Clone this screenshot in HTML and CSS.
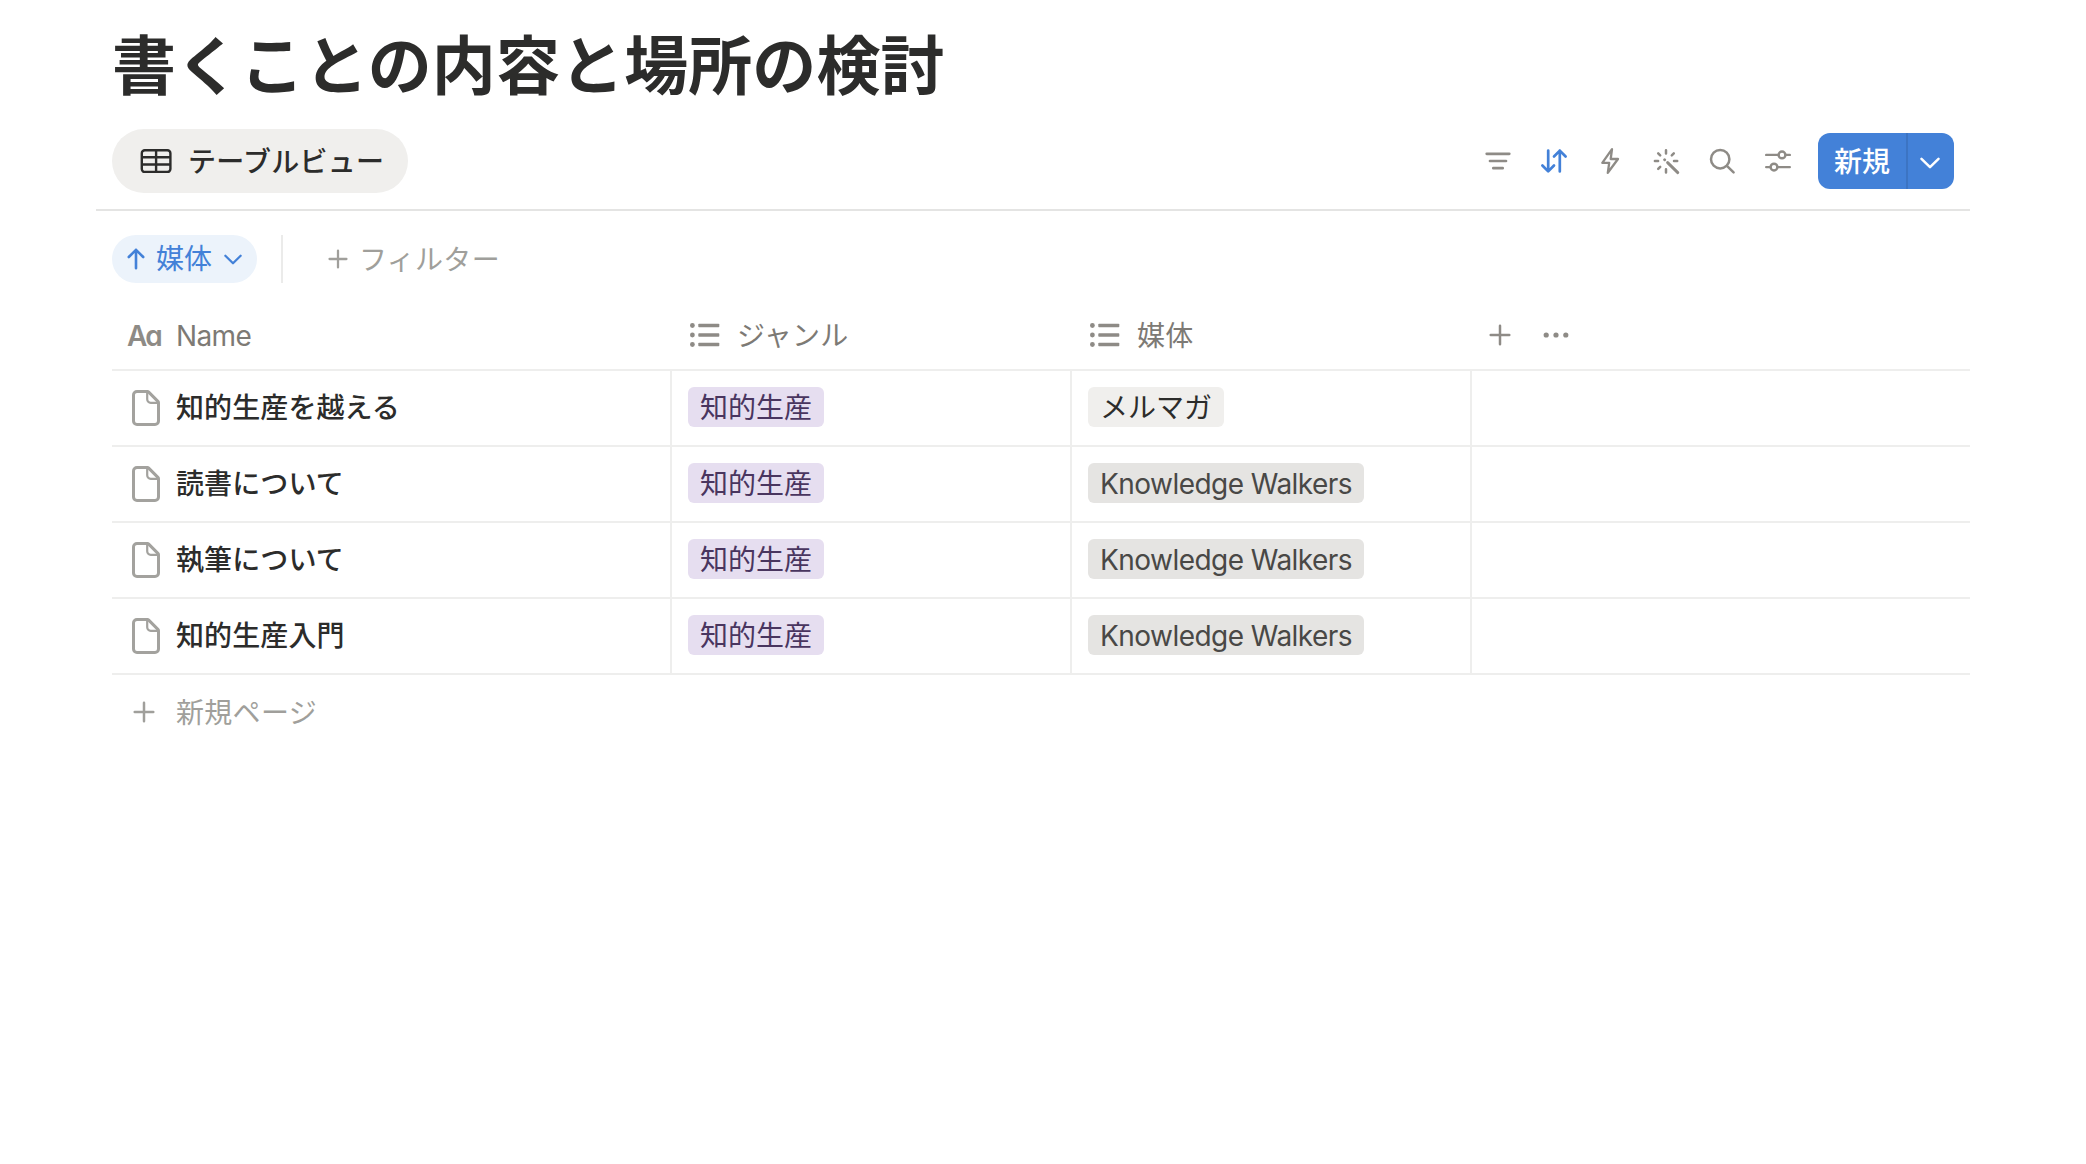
FILE: index.html
```html
<!DOCTYPE html>
<html lang="ja">
<head>
  <meta charset="UTF-8" />
  <meta name="viewport" content="width=device-width, initial-scale=1.0" />
  <title>書くことの内容と場所の検討</title>
  <link rel="stylesheet" href="styles.css">
</head>
<body>
  <!-- 共通アイコン -->
  <svg class="defs" width="0" height="0">
    <symbol id="icon-page" viewBox="0 0 28 36">
      <path d="M5 1.5h10.2a2 2 0 0 1 1.5.6l9.2 9.3a2 2 0 0 1 .6 1.4V31a3.5 3.5 0 0 1-3.5 3.5H5A3.5 3.5 0 0 1 1.5 31V5A3.5 3.5 0 0 1 5 1.5z" fill="none" stroke="currentColor" stroke-width="3"/>
      <path d="M15.2 2v7.3a3.5 3.5 0 0 0 3.5 3.5H26" fill="none" stroke="currentColor" stroke-width="2.2"/>
    </symbol>
    <symbol id="icon-list" viewBox="0 0 30 24">
      <g fill="currentColor">
        <circle cx="2.4" cy="2.5" r="2.4"/><circle cx="2.4" cy="12" r="2.4"/><circle cx="2.4" cy="21.5" r="2.4"/>
        <rect x="8.3" y=".8" width="21" height="3.4" rx=".8"/><rect x="8.3" y="10.3" width="21" height="3.4" rx=".8"/><rect x="8.3" y="19.8" width="21" height="3.4" rx=".8"/>
      </g>
    </symbol>
    <symbol id="icon-plus" viewBox="0 0 22 22">
      <path d="M11 1.7v18.6M1.7 11h18.6" fill="none" stroke="currentColor" stroke-width="2.5" stroke-linecap="round"/>
    </symbol>
    <symbol id="icon-chevron" viewBox="0 0 20 12">
      <path d="M1.5 1.8 10 10.2l8.5-8.4" fill="none" stroke="currentColor" stroke-width="2.5" stroke-linecap="round" stroke-linejoin="round"/>
    </symbol>
  </svg>

  <main class="page">
    <h1>書くことの内容と場所の検討</h1>

    <!-- ビュー切り替えとツールバー -->
    <div class="view-bar">
      <div class="view-tab">
        <svg width="32" height="24" viewBox="0 0 32 24" fill="none" stroke="currentColor" stroke-width="2.4">
          <rect x="1.8" y="1.2" width="28.6" height="21.8" rx="3"/>
          <path d="M2 8.3h28.4M2 15.5h28.4M16.1 1v22"/>
        </svg>
        <span>テーブルビュー</span>
      </div>

      <div class="tools">
        <svg viewBox="0 0 32 32" stroke-width="2.7"><path d="M4.7 8.8h22.6M8 16h16M11.3 23.2h9.4"/></svg>
        <svg class="active" viewBox="0 0 32 32" stroke-width="2.7"><path d="M10.2 5.5v20.8M4.4 20.5l5.8 5.9 5.8-5.9M21.8 26.5V5.7M16 11.5l5.8-5.9 5.8 5.9"/></svg>
        <svg viewBox="0 0 32 32" stroke-width="2.3"><path d="M18 4.2 8.3 17.8h6.9l-1.4 10L24 14h-7.3z"/></svg>
        <svg viewBox="0 0 32 32" stroke-width="2.5"><path d="M16 5.2v3.2M16 24.2v3.2M4.9 16.1h3.2M24 16.1h3.2M8.2 8.4l2 2M23.8 8.4l-2 2M8.2 23.9l2-2"/><path d="M14.6 14.7l.1.1M17.6 17.6l10.2 10" stroke-width="2.9"/></svg>
        <svg viewBox="0 0 32 32" stroke-width="2.5"><circle cx="14.2" cy="14.2" r="9.2"/><path d="M20.9 20.9l6.7 6.5"/></svg>
        <svg viewBox="0 0 32 32" stroke-width="2.4"><path d="M4.2 9.9h12.2M23.6 9.9h4.2M4.2 22.1h4.2M15.6 22.1h12.2"/><circle cx="20" cy="9.9" r="3.4"/><circle cx="12" cy="22.1" r="3.4"/></svg>
      </div>

      <div class="new-button">
        <span class="new-label">新規</span>
        <span class="new-more"><svg width="20" height="12"><use href="#icon-chevron"/></svg></span>
      </div>
    </div>

    <!-- 並べ替え・フィルター -->
    <div class="filter-bar">
      <div class="sort-pill">
        <svg width="18" height="22" viewBox="0 0 18 22" fill="none" stroke="currentColor" stroke-width="2.6" stroke-linecap="round" stroke-linejoin="round"><path d="M9 20.2V1.8M1.8 9 9 1.8 16.2 9"/></svg>
        <span>媒体</span>
        <svg class="pill-chevron" width="18" height="11"><use href="#icon-chevron"/></svg>
      </div>
      <div class="divider"></div>
      <div class="add-filter">
        <svg width="20" height="20"><use href="#icon-plus"/></svg>
        <span>フィルター</span>
      </div>
    </div>

    <div class="table">
      <div class="row head">
        <div class="cell"><span class="type-title">Aa</span><span class="name-label">Name</span></div>
        <div class="cell"><svg width="30" height="24"><use href="#icon-list"/></svg><span>ジャンル</span></div>
        <div class="cell"><svg width="30" height="24"><use href="#icon-list"/></svg><span>媒体</span></div>
        <div class="cell actions">
          <svg width="22" height="22"><use href="#icon-plus"/></svg>
          <svg width="26" height="6" viewBox="0 0 26 6" fill="currentColor"><circle cx="3.2" cy="3" r="2.6"/><circle cx="13" cy="3" r="2.6"/><circle cx="22.8" cy="3" r="2.6"/></svg>
        </div>
      </div>

      <div class="row">
        <div class="cell name"><svg width="28" height="36"><use href="#icon-page"/></svg><span>知的生産を越える</span></div>
        <div class="cell"><span class="tag purple">知的生産</span></div>
        <div class="cell"><span class="tag light">メルマガ</span></div>
        <div class="cell"></div>
      </div>
      <div class="row">
        <div class="cell name"><svg width="28" height="36"><use href="#icon-page"/></svg><span>読書について</span></div>
        <div class="cell"><span class="tag purple">知的生産</span></div>
        <div class="cell"><span class="tag gray">Knowledge Walkers</span></div>
        <div class="cell"></div>
      </div>
      <div class="row">
        <div class="cell name"><svg width="28" height="36"><use href="#icon-page"/></svg><span>執筆について</span></div>
        <div class="cell"><span class="tag purple">知的生産</span></div>
        <div class="cell"><span class="tag gray">Knowledge Walkers</span></div>
        <div class="cell"></div>
      </div>
      <div class="row">
        <div class="cell name"><svg width="28" height="36"><use href="#icon-page"/></svg><span>知的生産入門</span></div>
        <div class="cell"><span class="tag purple">知的生産</span></div>
        <div class="cell"><span class="tag gray">Knowledge Walkers</span></div>
        <div class="cell"></div>
      </div>

      <div class="new-page">
        <svg width="22" height="22"><use href="#icon-plus"/></svg>
        <span>新規ページ</span>
      </div>
    </div>
  </main>
</body>
</html>
```
FILE: styles.css
```css
* {
  box-sizing: border-box;
}

body {
  margin: 0;
  background: #fff;
  color: #2c2c2b;
  font-family: Inter, "Noto Sans CJK JP", sans-serif;
  font-size: 28px;
  line-height: 40px;
  white-space: nowrap;
}

svg {
  display: block;
  flex: none;
}

.defs {
  position: absolute;
}

.page {
  width: 1874px;
  margin-left: 96px;
  padding-top: 26px;
}

h1 {
  margin: 0;
  padding-left: 16px;
  font-size: 64px;
  font-weight: 700;
  line-height: 80px;
  letter-spacing: 0.1px;
}

/* ビュー切り替え */
.view-bar {
  display: flex;
  align-items: center;
  height: 105px;
  padding: 7px 16px 0;
  border-bottom: 2px solid #e4e4e3;
}

.view-tab {
  display: flex;
  align-items: center;
  gap: 16px;
  width: 296px;
  height: 64px;
  padding-left: 28px;
  border-radius: 32px;
  background: #f0efed;
  font-weight: 500;
  letter-spacing: 0.3px;
}

.view-tab span {
  padding-top: 2px;
}

.tools {
  display: flex;
  gap: 24px;
  margin-left: auto;
}

.tools svg {
  width: 32px;
  height: 32px;
  fill: none;
  stroke: #8e8b86;
  stroke-linecap: round;
  stroke-linejoin: round;
}

.tools .active {
  stroke: #4381d8;
}

.new-button {
  display: flex;
  width: 136px;
  height: 56px;
  margin-left: 24px;
  border-radius: 12px;
  background: #4381d8;
  color: #fff;
  font-weight: 500;
  line-height: 58px;
}

.new-label {
  width: 88px;
  padding-left: 16px;
}

.new-more {
  display: flex;
  flex: 1;
  align-items: center;
  padding: 3px 0 0 12px;
  border-left: 2px solid #3c74c3;
}

/* 並べ替え・フィルター */
.filter-bar {
  display: flex;
  align-items: center;
  height: 48px;
  margin: 24px 0 0 16px;
}

.sort-pill {
  display: flex;
  align-items: center;
  height: 48px;
  width: 145px;
  padding-left: 15px;
  border-radius: 24px;
  background: #ecf3fb;
  color: #4381d8;
}

.sort-pill span {
  margin-left: 11px;
}

.pill-chevron {
  margin-left: 12px;
}

.divider {
  width: 2px;
  height: 48px;
  margin: 0 45px 0 24px;
  background: #ebebea;
}

.add-filter {
  display: flex;
  align-items: center;
  gap: 11px;
  color: #a09f9b;
  letter-spacing: 0.3px;
}

.add-filter span {
  padding-top: 1px;
}

/* テーブル */
.table {
  margin: 20px 0 0 16px;
}

.row {
  display: grid;
  grid-template-columns: 560px 400px 400px 1fr;
  height: 76px;
  border-bottom: 2px solid #eeeeed;
}

.cell {
  display: flex;
  align-items: center;
  padding: 0 16px;
  border-right: 2px solid #eeeeed;
}

.cell:last-child {
  border-right: none;
}

.head {
  height: 68px;
  color: #7d7a75;
}

.head .cell {
  gap: 17px;
  padding: 0 16px 2px 18px;
  border-right: none;
}

.head svg {
  color: #8e8b86;
}

.head span {
  padding-top: 2px;
  letter-spacing: 0.2px;
}

.head .cell:first-child {
  gap: 0;
  padding-left: 15px;
}

.head .type-title {
  width: 49px;
  color: #8e8b86;
  font-weight: 600;
  font-feature-settings: "cv11";
  letter-spacing: -1.6px;
}

.head .name-label {
  letter-spacing: -0.6px;
}

.head .actions {
  gap: 32px;
  padding-left: 17px;
}

.name {
  gap: 16px;
  padding-left: 20px;
  font-weight: 500;
  letter-spacing: 0.1px;
}

.name svg {
  color: #a3a29e;
}

.tag {
  height: 40px;
  margin-bottom: 2px;
  padding: 1px 12px 0;
  border-radius: 6px;
}

.purple {
  background: #e6def0;
  color: #49355f;
}

.light {
  background: #f0efed;
}

/* 英字タグは字間を詰める */
.gray {
  background: #e5e4e2;
  color: #494846;
  letter-spacing: -0.54px;
}

.new-page {
  display: flex;
  align-items: center;
  gap: 21px;
  height: 74px;
  padding-left: 21px;
  color: #a09f9b;
  letter-spacing: 0.3px;
}

.new-page span {
  padding-top: 1px;
}
```
